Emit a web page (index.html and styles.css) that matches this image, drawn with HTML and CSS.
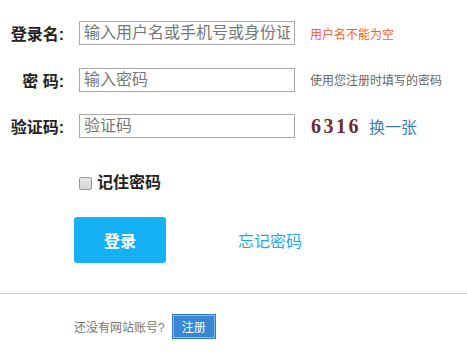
FILE: index.html
```html
<!DOCTYPE html>
<html lang="zh-CN">
<head>
    <meta charset="UTF-8">
    <meta name="viewport" content="width=device-width, initial-scale=1.0">
    <title>用户登录</title>
    <link rel="stylesheet" href="styles.css">
</head>
<body>
    <div class="login-box">
        <div class="form-row">
            <label for="username">登录名:</label>
            <input type="text" id="username" placeholder="输入用户名或手机号或身份证号">
            <span class="tip error">用户名不能为空</span>
        </div>
        <div class="form-row">
            <label for="password">密 码:</label>
            <input type="password" id="password" placeholder="输入密码">
            <span class="tip">使用您注册时填写的密码</span>
        </div>
        <div class="form-row">
            <label for="captcha">验证码:</label>
            <input type="text" id="captcha" placeholder="验证码">
            <span class="captcha-img">6316</span>
            <a href="#" class="change-link">换一张</a>
        </div>

        <div class="remember">
            <input type="checkbox" id="remember">
            <label for="remember">记住密码</label>
        </div>

        <div class="actions">
            <button class="login-btn">登录</button>
            <a href="#" class="forget-link">忘记密码</a>
        </div>

        <div class="footer">
            <span>还没有网站账号?</span>
            <button class="reg-btn">注册</button>
        </div>
    </div>
</body>
</html>
```

FILE: styles.css
```css
body {
    margin: 0;
    font-family: "Liberation Sans", "Noto Sans CJK SC", sans-serif;
    background-color: #fff;
    color: #333;
}
.login-box {
    padding-top: 21px;
}
.form-row {
    display: flex;
    align-items: center;
    height: 24px;
    margin-bottom: 22.5px;
}
.form-row label {
    width: 64px;
    text-align: right;
    font-size: 16px;
    font-weight: bold;
    color: #222;
    white-space: pre;
}
.form-row input {
    width: 216px;
    height: 24px;
    margin-left: 15px;
    padding: 0 4px;
    border: 1px solid #a9a9a9;
    box-sizing: border-box;
    font-size: 16px;
    font-family: inherit;
    outline: none;
}
.form-row input::placeholder {
    color: #777;
}
.tip {
    margin-left: 15px;
    font-size: 12px;
    color: #666;
}
.tip.error {
    color: #ff5a2b;
}
.captcha-img {
    margin-left: 16px;
    width: 49px;
    font-family: "Liberation Serif", serif;
    font-weight: bold;
    font-size: 20px;
    letter-spacing: 2.5px;
    color: #6a2a30;
    line-height: 24px;
}
.change-link {
    margin-left: 9px;
    font-size: 16px;
    color: #3d7cbf;
    text-decoration: none;
}
/* 记住密码 */
.remember {
    display: flex;
    align-items: center;
    margin: 33px 0 0 79px;
    height: 20px;
}
.remember input {
    -webkit-appearance: none;
    appearance: none;
    width: 13px;
    height: 13px;
    margin: 4px 5px 0 0;
    border: 1px solid #9a9a9a;
    border-radius: 2px;
    background: linear-gradient(#e8e8e8, #d4d4d4);
}
.remember label {
    font-size: 16px;
    font-weight: bold;
    color: #222;
}
.actions {
    display: flex;
    align-items: center;
    margin: 26px 0 0 74px;
}
.login-btn {
    width: 92px;
    height: 46px;
    background-color: #16b0f5;
    color: white;
    border: none;
    border-radius: 3px;
    font-size: 16px;
    font-weight: bold;
    font-family: inherit;
    cursor: pointer;
}
.forget-link {
    margin-left: 72px;
    font-size: 16px;
    color: #1fa8ee;
    text-decoration: none;
}
.footer {
    display: flex;
    align-items: center;
    margin-top: 30px;
    padding: 20px 0 0 74px;
    border-top: 1px solid #ccc;
    font-size: 12px;
    color: #777;
}
.reg-btn {
    margin-left: 7px;
    height: 25px;
    padding: 0 9px;
    background-color: #3a88d4;
    color: white;
    border: 1px solid #3079c4;
    box-shadow: inset 0 0 0 1px #8cbcea;
    font-size: 12px;
    font-family: inherit;
    cursor: pointer;
}
```
